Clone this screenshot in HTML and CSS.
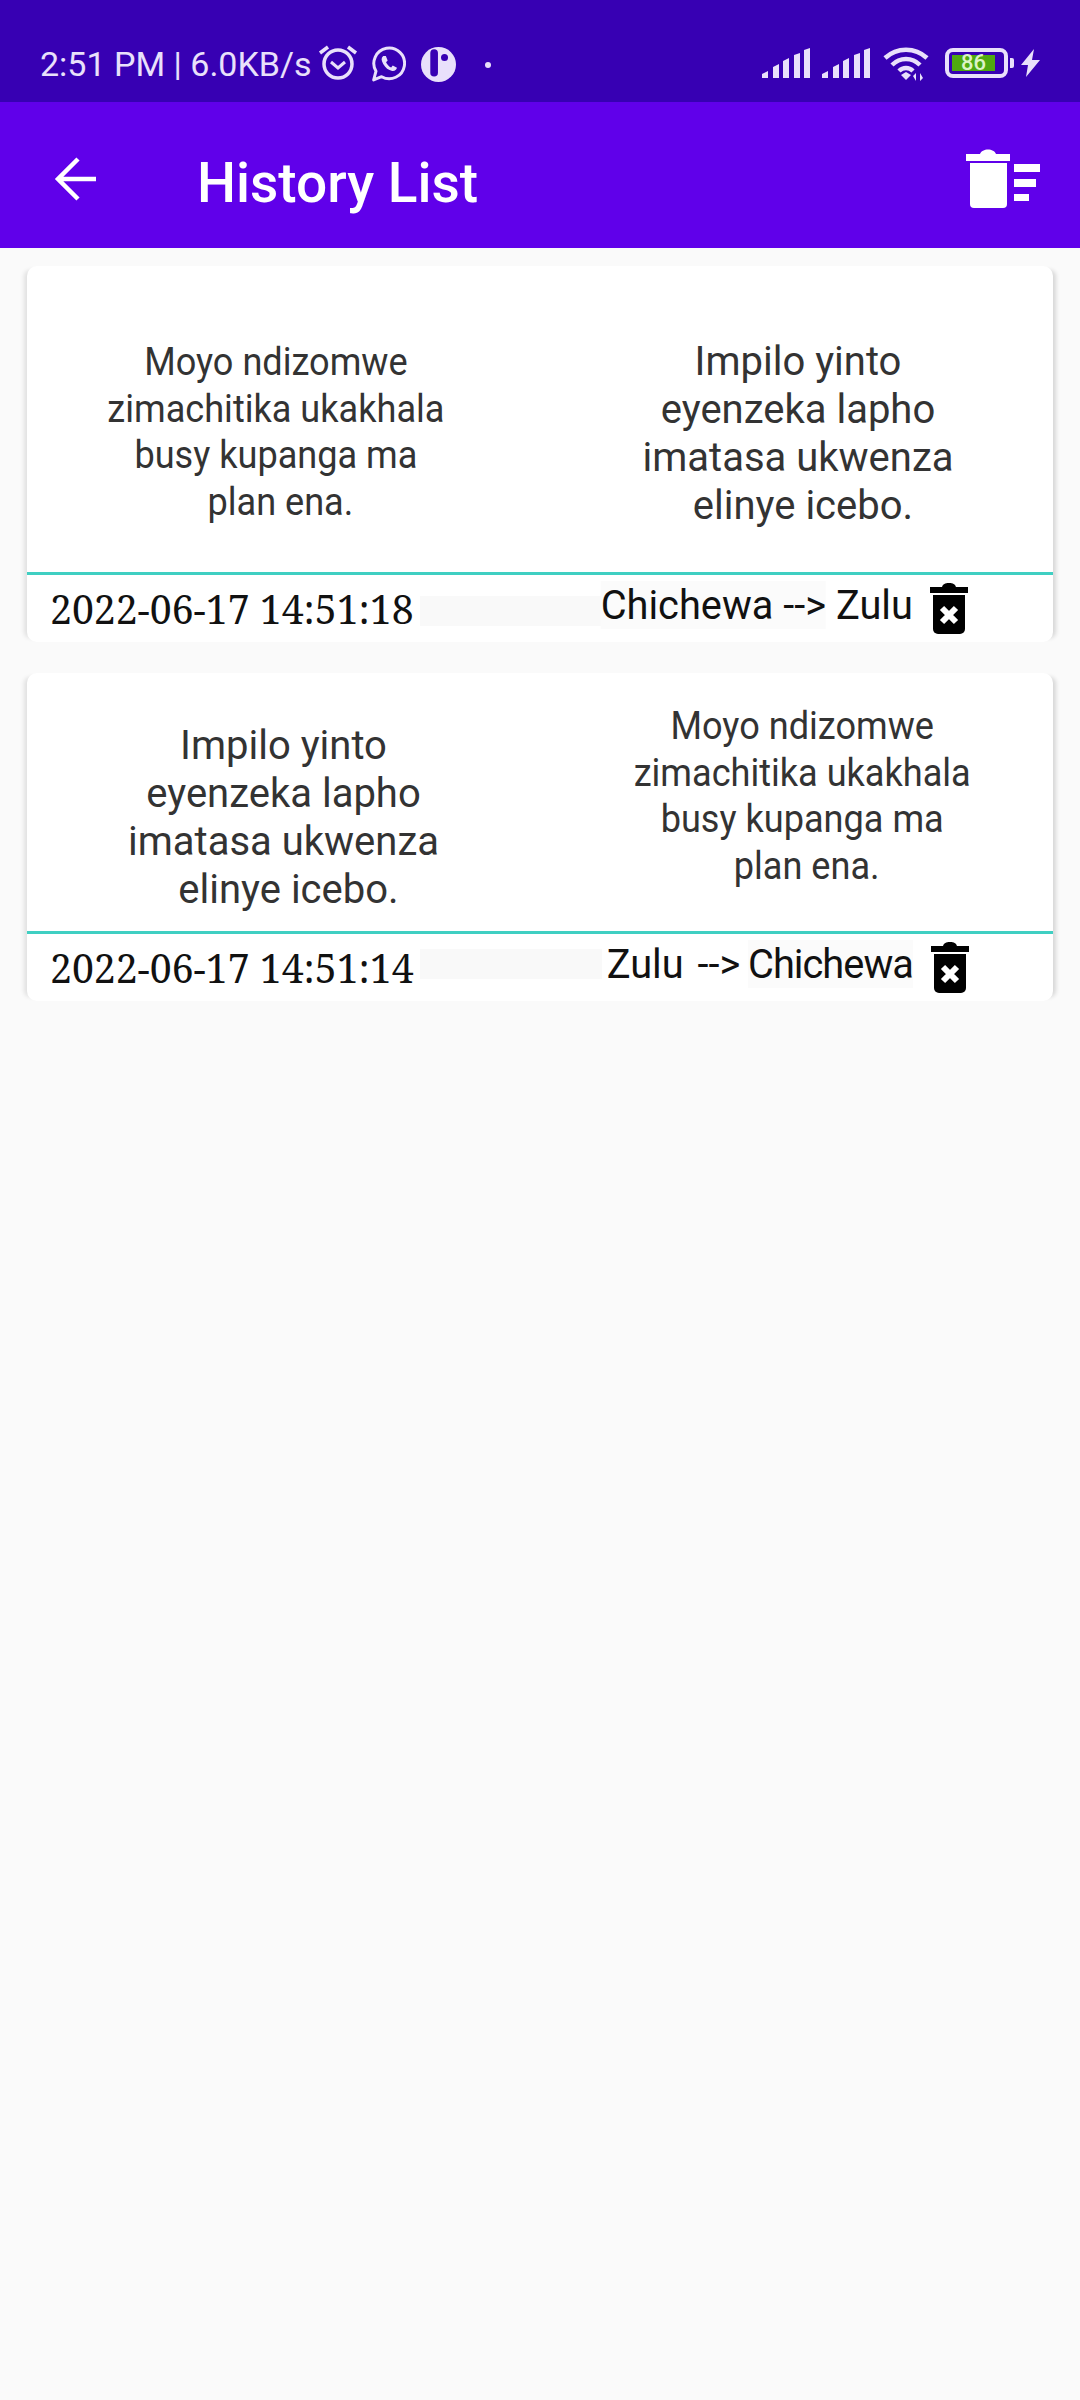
FILE: index.html
```html
<!DOCTYPE html>
<html lang="en">
<head>
<meta charset="utf-8">
<title>History List</title>
<link rel="stylesheet" href="styles.css">
</head>
<body>
<div class="statusbar">
  <span class="clock">2:51 PM | 6.0KB/s</span>
  <svg class="ic-alarm" viewBox="0 0 40 36" width="40" height="36"><circle cx="20" cy="20" r="14" fill="none" stroke="currentColor" stroke-width="3.5"/><path d="M13 18l7 6 7-6" fill="none" stroke="currentColor" stroke-width="3"/><path d="M2 9l8-6M38 9l-8-6" fill="none" stroke="currentColor" stroke-width="3.5"/></svg>
  <svg class="ic-wa" viewBox="0 0 33 34" width="35" height="36"><path d="M2.500 32l2.200-8.200A14.500 14.500 0 1 1 10 29z" fill="none" stroke="currentColor" stroke-width="2.800" stroke-linejoin="round"/><path d="M11.500 9.500c-2 1.500-2 4 0 7.500 2 3.500 5 6 8.500 6.500 2.500.3 4-1 4.500-3l-4-2-1.500 1.800c-2-.8-4-3-4.800-5l1.500-1.500-1.700-4.300z" fill="currentColor"/></svg>
  <svg class="ic-app" viewBox="0 0 32 32" width="35" height="35"><circle cx="16" cy="16" r="16" fill="currentColor"/><rect x="8.500" y="2" width="7" height="25" rx="3.500" fill="#3700b3"/><circle cx="21.500" cy="9.500" r="3.200" fill="#3700b3"/></svg>
  <span class="dot"></span>
  <span class="spacer"></span>
  <svg class="ic-signal" viewBox="0 0 48 30" width="48" height="30"><path d="M0 30v-4l6-3v7zM11 30V19l6-3v14zM21 30V13l6-3v20zM32 30V7l6-2v25zM42 30V2l6-2v30z" fill="currentColor"/></svg>
  <svg class="ic-signal" viewBox="0 0 48 30" width="48" height="30"><path d="M0 30v-4l6-3v7zM11 30V19l6-3v14zM21 30V13l6-3v20zM32 30V7l6-2v25zM42 30V2l6-2v30z" fill="currentColor"/></svg>
  <svg class="ic-wifi" viewBox="0 0 46 35" width="46" height="35"><path d="M2 11C14 0 32 0 44 11M9 18C17 10 29 10 37 18M16 24c4-4 10-4 14 0" fill="none" stroke="currentColor" stroke-width="4.500"/><path d="M18 28l5-3 5 3-5 5z" fill="currentColor"/><path d="M33 34v-8l-3 3zM37 26v8l3-3z" fill="currentColor"/></svg>
  <div class="battery"><span class="battery-fill">86</span></div>
  <span class="battery-nub"></span>
  <svg class="ic-bolt" viewBox="0 0 19 28" width="19" height="28"><path d="M13 0L0 16h7L5 28 19 11h-8z" fill="currentColor"/></svg>
</div>

<header class="appbar">
  <svg class="ic-back" viewBox="0 0 42 44" width="42" height="44"><path d="M42 22H5M24 2L4 22l20 20" fill="none" stroke="currentColor" stroke-width="4.500"/></svg>
  <h1 class="title">History List</h1>
  <svg class="ic-clear" viewBox="0 0 74 59" width="74" height="59"><path d="M0 5h14c2-6 14-6 16 0h14v7H0z" fill="currentColor"/><path d="M4 14h37v41a4 4 0 0 1-4 4H8a4 4 0 0 1-4-4z" fill="currentColor"/><path d="M48 15h26v8H48zM48 30h22v8H48zM48 45h15v7H48z" fill="currentColor"/></svg>
</header>

<main class="list">
  <article class="card card-a">
    <div class="texts">
      <p class="txt small">Moyo ndizomwe<br>zimachitika ukakhala<br>busy kupanga ma<br>&nbsp;plan ena.</p>
      <p class="txt big">Impilo yinto<br>eyenzeka lapho<br>imatasa ukwenza<br>&nbsp;elinye icebo.</p>
    </div>
    <div class="meta">
      <span class="date">2022-06-17 14:51:18</span>
      <span class="strip strip-a"></span>
      <span class="langs"><span class="tint">Chichewa --&gt;</span> Zulu</span>
      <svg class="ic-del" viewBox="0 0 38 51" width="38" height="51"><path d="M0 4h12c1-3 3-4 7-4s6 1 7 4h12v6H0z" fill="#000"/><path d="M3 12h32v34a5 5 0 0 1-5 5H8a5 5 0 0 1-5-5z" fill="#000"/><path d="M12 25l14 14M26 25L12 39" stroke="#fff" stroke-width="6"/></svg>
    </div>
  </article>

  <article class="card card-b">
    <div class="texts">
      <p class="txt big">Impilo yinto<br>eyenzeka lapho<br>imatasa ukwenza<br>&nbsp;elinye icebo.</p>
      <p class="txt small">Moyo ndizomwe<br>zimachitika ukakhala<br>busy kupanga ma<br>&nbsp;plan ena.</p>
    </div>
    <div class="meta">
      <span class="date">2022-06-17 14:51:14</span>
      <span class="strip strip-b"></span>
      <span class="langs">Zulu <span class="arrow">--&gt;</span><span class="tint tight">Chichewa</span></span>
      <svg class="ic-del" viewBox="0 0 38 51" width="38" height="51"><path d="M0 4h12c1-3 3-4 7-4s6 1 7 4h12v6H0z" fill="#000"/><path d="M3 12h32v34a5 5 0 0 1-5 5H8a5 5 0 0 1-5-5z" fill="#000"/><path d="M12 25l14 14M26 25L12 39" stroke="#fff" stroke-width="6"/></svg>
    </div>
  </article>
</main>
</body>
</html>
```

FILE: styles.css
```css
* { box-sizing: border-box; }
html, body { margin: 0; padding: 0; }
body {
  width: 1080px;
  height: 2400px;
  background: #fafafa;
  font-family: Roboto, "Liberation Sans", sans-serif;
  overflow: hidden;
}
svg { display: block; flex: none; }

.statusbar {
  height: 102px;
  background: #3700b3;
  color: #e9e0fb;
  display: flex;
  align-items: center;
  padding: 24px 40px 0;
}
.clock { font-size: 34px; width: 278px; white-space: nowrap; margin-top: 2px; }
.ic-alarm { margin-top: -2px; }
.ic-wa { margin-left: 13px; margin-top: 2px; }
.ic-app { margin-left: 15px; margin-top: 2px; }
.dot { width: 6px; height: 6px; border-radius: 50%; background: currentColor; margin-left: 29px; margin-top: 4px; }
.spacer { flex: 1; }
.ic-signal { margin-right: 12px; }
.ic-wifi { margin-left: 1px; margin-top: 2px; }
.battery {
  width: 63px;
  height: 30px;
  margin-left: 16px;
  border: 4px solid currentColor;
  border-radius: 8px;
  padding: 3px;
}
.battery-fill {
  display: block;
  width: 43px;
  height: 16px;
  background: #4fa910;
  color: #dcf3c6;
  font-size: 22px;
  font-weight: 500;
  line-height: 16px;
  text-align: center;
}
.battery-nub { width: 4px; height: 10px; background: currentColor; margin-left: 2px; border-radius: 0 2px 2px 0; }
.ic-bolt { margin-left: 7px; }

.appbar {
  height: 146px;
  background: #6000ea;
  color: #fff;
  display: flex;
  align-items: center;
  padding: 0 40px 0 54px;
}
.ic-back { margin-top: 8px; }
.title { font-size: 55px; font-weight: 500; margin: 16px 0 0 101px; flex: 1; line-height: 1; }
.ic-clear { margin-top: 7px; }

.list { padding: 18px 27px 0; display: flex; flex-direction: column; gap: 31px; }
.card {
  background: #fff;
  border-radius: 10px;
  box-shadow: -7px 0 4px -4px rgba(0,0,0,.1), 7px 0 4px -4px rgba(0,0,0,.14);
  overflow: hidden;
}
.texts { display: grid; grid-template-columns: 1fr 1fr; border-bottom: 3px solid #3fcfc2; }
.card-a .texts { height: 309px; }
.card-b .texts { height: 261px; }
.txt { margin: 0; text-align: center; color: #333; white-space: nowrap; }
.small { font-size: 38px; line-height: 46.500px; transform: scaleX(.95); }
.big { font-size: 40px; line-height: 48px; }
.card-a .small { padding: 73px 16px 0 0; }
.card-a .big { padding: 72px 0 0 3px; }
.card-b .big { padding-top: 49px; }
.card-b .small { padding: 30px 0 0 12px; }

.meta { display: flex; align-items: flex-start; height: 67px; padding-left: 23px; color: #111; }
.date { font-family: "Noto Serif", "Liberation Serif", "DejaVu Serif", serif; font-size: 39.200px; line-height: 50px; margin-top: 9px; width: 370px; white-space: nowrap; }
.strip { background: #f9f9f9; height: 30px; flex: none; margin-right: -10px; }
.strip-a { width: 181px; margin-top: 21px; }
.strip-b { width: 182px; margin-top: 15px; }
.langs { font-size: 41px; line-height: 48px; margin-top: 6px; white-space: nowrap; width: 321px; text-align: right; transform: scaleX(.97); transform-origin: right; }
.tint { background: #fbfbfb; }
.tight { letter-spacing: -1px; }
.arrow { margin: 0 8px 0 4px; }
.ic-del { margin: 8px 0 0 18px; }
```
